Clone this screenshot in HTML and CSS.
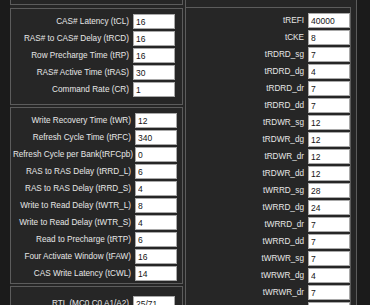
FILE: index.html
```html
<!DOCTYPE html>
<html lang="en">
<head>
    <meta charset="UTF-8">
    <meta name="viewport" content="width=device-width, initial-scale=1.0">
    <title>Memory Timings</title>
    <link rel="stylesheet" href="styles.css">
</head>
<body>
    <div class="window">
        <div class="left-col">
            <div class="box box-tail"></div>

            <div class="box box-primary">
                <div class="row"><label>CAS# Latency (tCL)</label><input type="text" value="16"></div>
                <div class="row"><label>RAS# to CAS# Delay (tRCD)</label><input type="text" value="16"></div>
                <div class="row"><label>Row Precharge Time (tRP)</label><input type="text" value="16"></div>
                <div class="row"><label>RAS# Active Time (tRAS)</label><input type="text" value="30"></div>
                <div class="row"><label>Command Rate (CR)</label><input type="text" value="1"></div>
            </div>

            <div class="box box-secondary">
                <div class="row"><label>Write Recovery Time (tWR)</label><input type="text" value="12"></div>
                <div class="row"><label>Refresh Cycle Time (tRFC)</label><input type="text" value="340"></div>
                <div class="row row-tight"><label>Refresh Cycle per Bank(tRFCpb)</label><input type="text" value="0"></div>
                <div class="row"><label>RAS to RAS Delay (tRRD_L)</label><input type="text" value="6"></div>
                <div class="row"><label>RAS to RAS Delay (tRRD_S)</label><input type="text" value="4"></div>
                <div class="row"><label>Write to Read Delay (tWTR_L)</label><input type="text" value="8"></div>
                <div class="row"><label>Write to Read Delay (tWTR_S)</label><input type="text" value="4"></div>
                <div class="row"><label>Read to Precharge (tRTP)</label><input type="text" value="6"></div>
                <div class="row"><label>Four Activate Window (tFAW)</label><input type="text" value="16"></div>
                <div class="row"><label>CAS Write Latency (tCWL)</label><input type="text" value="14"></div>
            </div>

            <div class="box box-rtl">
                <div class="row"><label>RTL (MC0 C0 A1/A2)</label><input type="text" value="25/71"></div>
            </div>
        </div>

        <div class="right-col">
            <div class="box box-turn">
                <div class="row"><label>tREFI</label><input type="text" value="40000"></div>
                <div class="row"><label>tCKE</label><input type="text" value="8"></div>
                <div class="row"><label>tRDRD_sg</label><input type="text" value="7"></div>
                <div class="row"><label>tRDRD_dg</label><input type="text" value="4"></div>
                <div class="row"><label>tRDRD_dr</label><input type="text" value="7"></div>
                <div class="row"><label>tRDRD_dd</label><input type="text" value="7"></div>
                <div class="row"><label>tRDWR_sg</label><input type="text" value="12"></div>
                <div class="row"><label>tRDWR_dg</label><input type="text" value="12"></div>
                <div class="row"><label>tRDWR_dr</label><input type="text" value="12"></div>
                <div class="row"><label>tRDWR_dd</label><input type="text" value="12"></div>
                <div class="row"><label>tWRRD_sg</label><input type="text" value="28"></div>
                <div class="row"><label>tWRRD_dg</label><input type="text" value="24"></div>
                <div class="row"><label>tWRRD_dr</label><input type="text" value="7"></div>
                <div class="row"><label>tWRRD_dd</label><input type="text" value="7"></div>
                <div class="row"><label>tWRWR_sg</label><input type="text" value="7"></div>
                <div class="row"><label>tWRWR_dg</label><input type="text" value="4"></div>
                <div class="row"><label>tWRWR_dr</label><input type="text" value="7"></div>
                <div class="row"><label>tWRWR_dd</label><input type="text" value="7"></div>
            </div>
        </div>
    </div>
</body>
</html>
```

FILE: styles.css
```css
* {
    margin: 0;
    padding: 0;
    box-sizing: border-box;
}

body {
    font-family: 'Liberation Sans', Arial, sans-serif;
    background: #1b1b1b;
    width: 370px;
    height: 305px;
    overflow: hidden;
}

.window {
    display: flex;
    height: 305px;
    padding-left: 10px;
}

/* left column with stacked group boxes */
.left-col {
    width: 175px;
    background: #262626;
    display: flex;
    flex-direction: column;
    gap: 2px;
    overflow: hidden;
}

.box {
    border: 1px solid #5c5c5c;
    background: #262626;
    display: flex;
    flex-direction: column;
    gap: 2px;
    flex-shrink: 0;
}

.left-col .box {
    width: 173px;
}

.box-tail {
    height: 5px;
    border-top: none;
    margin-bottom: 1px;
}

.box-primary {
    height: 97px;
    padding: 5px 7px 0 0;
}

.box-secondary {
    height: 177px;
    padding: 5px 5px 0 0;
}

.box-rtl {
    height: 40px;
    padding: 9px 7px 0 0;
    border-bottom: none;
}

/* right column, scrolled list */
.right-col {
    width: 172px;
    background: #262626;
    border-left: 1px solid #5c5c5c;
    border-right: 1px solid #5c5c5c;
    overflow: hidden;
}

.box-turn {
    margin-top: 7px;
    width: 165px;
    border-left: none;
    border-bottom: none;
    padding: 5px 0 0 0;
}

.row {
    display: flex;
    justify-content: flex-end;
    align-items: center;
    gap: 4px;
    height: 15px;
}

.row-tight {
    gap: 2px;
}

.row label {
    color: #e6e6e6;
    font-size: 8.2px;
    white-space: nowrap;
}

.row input {
    width: 42px;
    height: 15px;
    flex-shrink: 0;
    border: 1px solid #a8a8a8;
    background: #ffffff;
    color: #141414;
    font-family: 'Liberation Sans', Arial, sans-serif;
    font-size: 8.5px;
    padding: 0 2px;
    outline: none;
}
```
